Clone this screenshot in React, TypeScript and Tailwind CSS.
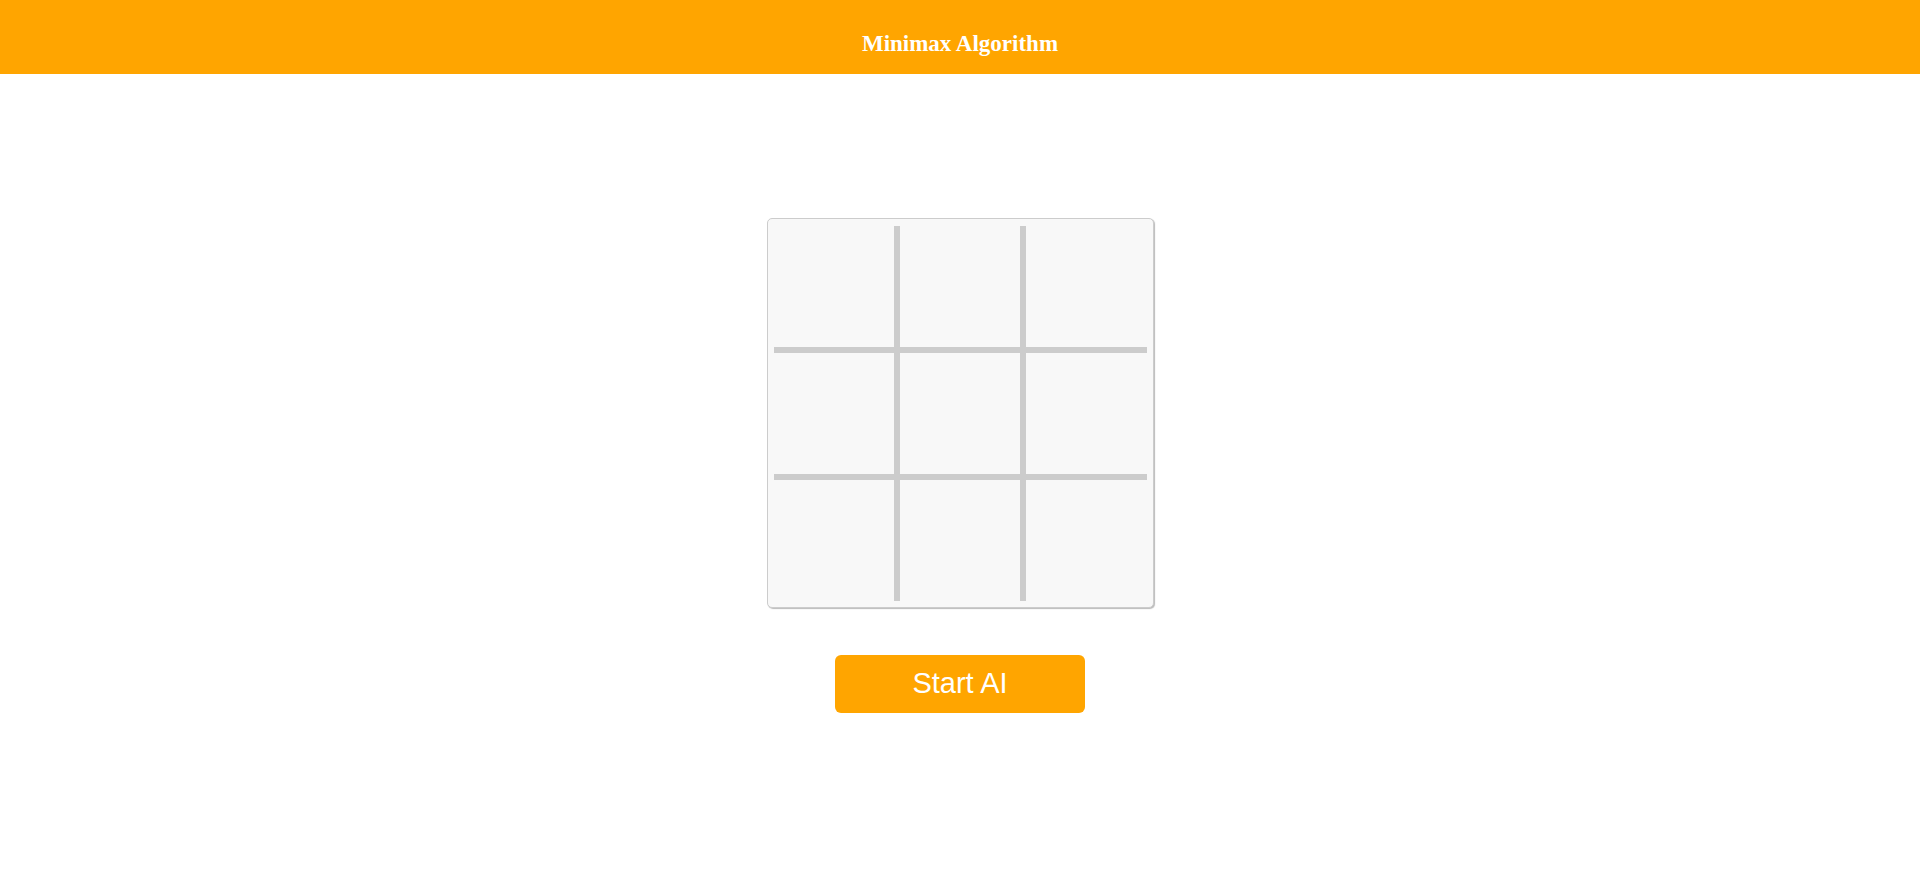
const cells = Array.from({ length: 9 }, (_, i) => i);

const Board = () => {
  return (
    <div className="rounded-[5px] border border-[#cccccc] bg-[#f8f8f8] px-[6px] pt-[7px] pb-[6px] shadow-[1px_1px_1px_#bbbbbb]">
      <div className="grid grid-cols-[120px_120px_121px] grid-rows-[121px_121px_121px] gap-[6px] bg-[#cccccc]">
        {cells.map((i) => (
          <div key={i} className="bg-[#f8f8f8]" />
        ))}
      </div>
    </div>
  );
};

export default function App() {
  return (
    <div className="min-h-screen bg-white">
      <header className="h-[74px] bg-[#ffa500] pt-[31px] text-center">
        <h1 className="text-[23px] font-bold leading-[26px] text-white [font-family:'Liberation_Serif',serif]">
          Minimax Algorithm
        </h1>
      </header>
      <main className="flex flex-col items-center pt-[144px]">
        <Board />
        <button className="mt-[47px] flex h-[58px] w-[250px] items-center justify-center rounded-[6px] bg-[#ffa500] text-[29px] text-white [font-family:'Liberation_Sans',Arial,sans-serif]">
          Start AI
        </button>
      </main>
    </div>
  );
}
